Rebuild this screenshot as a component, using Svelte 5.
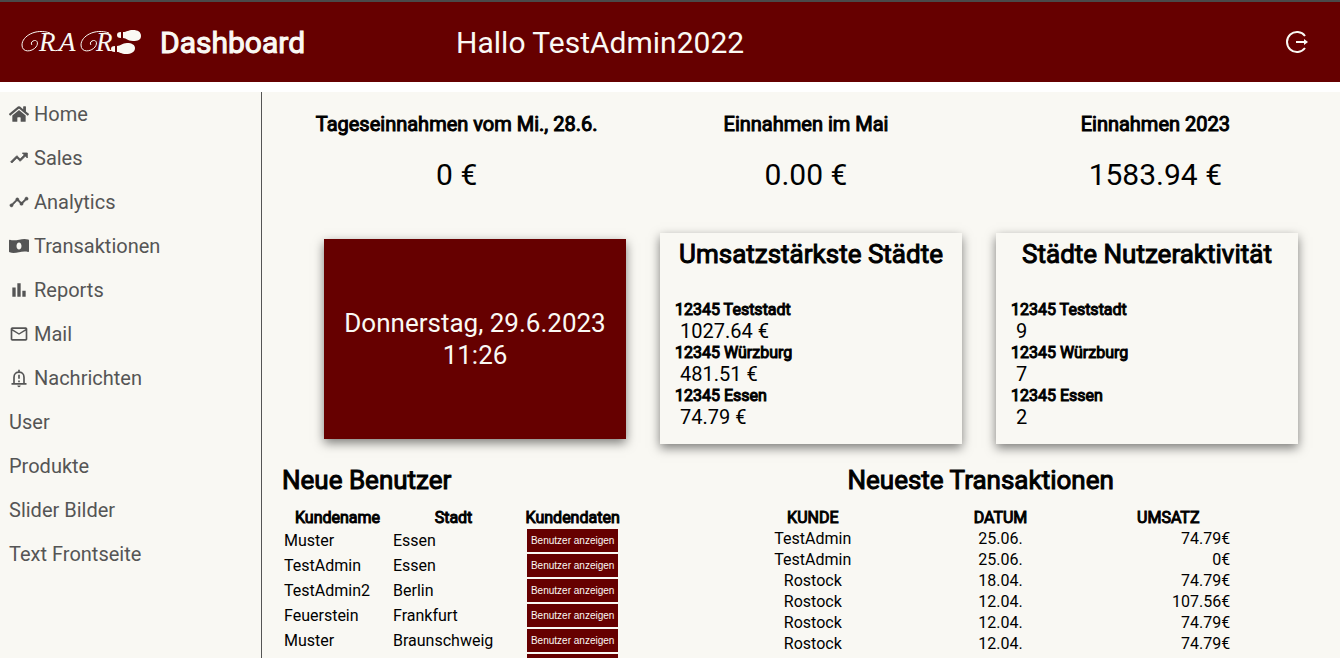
<script>
  const nav = [
    { label: 'Home', icon: 'home' },
    { label: 'Sales', icon: 'sales' },
    { label: 'Analytics', icon: 'analytics' },
    { label: 'Transaktionen', icon: 'money' },
    { label: 'Reports', icon: 'reports' },
    { label: 'Mail', icon: 'mail' },
    { label: 'Nachrichten', icon: 'bell' },
    { label: 'User' },
    { label: 'Produkte' },
    { label: 'Slider Bilder' },
    { label: 'Text Frontseite' },
  ];

  const stats = [
    { title: 'Tageseinnahmen vom Mi., 28.6.', value: '0 €' },
    { title: 'Einnahmen im Mai', value: '0.00 €' },
    { title: 'Einnahmen 2023', value: '1583.94 €' },
  ];

  const cityCards = [
    {
      title: 'Umsatzstärkste Städte',
      rows: [
        ['12345 Teststadt', '1027.64 €'],
        ['12345 Würzburg', '481.51 €'],
        ['12345 Essen', '74.79 €'],
      ],
    },
    {
      title: 'Städte Nutzeraktivität',
      rows: [
        ['12345 Teststadt', '9'],
        ['12345 Würzburg', '7'],
        ['12345 Essen', '2'],
      ],
    },
  ];

  const users = [
    ['Muster', 'Essen'],
    ['TestAdmin', 'Essen'],
    ['TestAdmin2', 'Berlin'],
    ['Feuerstein', 'Frankfurt'],
    ['Muster', 'Braunschweig'],
    ['Muster', 'Essen'],
  ];

  const transactions = [
    ['TestAdmin', '25.06.', '74.79€'],
    ['TestAdmin', '25.06.', '0€'],
    ['Rostock', '18.04.', '74.79€'],
    ['Rostock', '12.04.', '107.56€'],
    ['Rostock', '12.04.', '74.79€'],
    ['Rostock', '12.04.', '74.79€'],
  ];
</script>

<div class="page">
  <header>
    <a class="logo" href="#home" aria-label="RAR">
      <svg viewBox="0 0 122 30" width="122" height="30">
        <g class="lettering">
          <text x="19" y="24">R</text>
          <text x="39" y="24">A</text>
          <text x="76" y="24">R</text>
        </g>
        <g class="swash">
          <path d="M30 6C16 1 2 9 2 18c0 8 10 7 14 2 3-4 1-8-3-6-2 1-2 3-1 4" />
          <path d="M33 23c4 2 7-1 10-4" />
          <path d="M89 6C75 1 61 9 61 18c0 8 10 7 14 2 3-4 1-8-3-6-2 1-2 3-1 4" />
        </g>
        <g class="feet">
          <path d="M101 5v6c-3 0-4-1-4-3s1-3 4-3zM103 5c4 0 5-2 10-2s8 2 8 6-3 5-8 5c-6 0-6-3-10-3z" />
          <path d="M95 19v6c-3 0-4-1-4-3s1-3 4-3zM97 19c4 0 5-3 10-3s8 2 8 5c0 4-4 6-9 6s-6-2-9-2z" />
        </g>
      </svg>
    </a>
    <h1>Dashboard</h1>
    <p class="greeting">Hallo TestAdmin2022</p>
    <button class="logout" aria-label="Abmelden">
      <svg viewBox="0 0 24 24" width="24" height="24">
        <path class="ring" d="M20 6A10 10 0 1 0 20 18" />
        <path class="ring" d="M11 12h9" />
        <path class="tip" d="M19 9l4 3-4 3z" />
      </svg>
    </button>
  </header>

  <div class="body">
    <nav>
      {#each nav as item}
        <a href="#{item.label}">
          {#if item.icon}
            <svg viewBox="0 0 24 24" width="20" height="20">
              {#if item.icon === 'home'}
                <g transform="scale(0.04167)">
                  <path d="M280.370 148.260L96 300.110V464a16 16 0 0 0 16 16l112.060-.290a16 16 0 0 0 15.920-16V368a16 16 0 0 1 16-16h64a16 16 0 0 1 16 16v95.640a16 16 0 0 0 16 16.050L464 480a16 16 0 0 0 16-16V300L295.670 148.260a12.190 12.190 0 0 0-15.300 0zM571.600 251.470L488 182.560V44.050a12 12 0 0 0-12-12h-56a12 12 0 0 0-12 12v72.610L318.470 43a48 48 0 0 0-61 0L4.340 251.470a12 12 0 0 0-1.600 16.900l25.500 31A12 12 0 0 0 45.150 301l235.220-193.740a12.190 12.190 0 0 1 15.300 0L530.900 301a12 12 0 0 0 16.900-1.600l25.500-31a12 12 0 0 0-1.700-16.930z" transform="translate(0 32)" />
                </g>
              {:else if item.icon === 'sales'}
                <path d="M16 6l2.290 2.290-4.880 4.880-4-4L2 16.590 3.410 18l6-6 4 4 6.300-6.290L22 12V6z" stroke="currentColor" />
              {:else if item.icon === 'analytics'}
                <path d="M23 8c0 1.100-.9 2-2 2-.18 0-.350-.020-.510-.070l-3.560 3.550c.050.160.070.340.070.520 0 1.100-.9 2-2 2s-2-.9-2-2c0-.180.020-.360.070-.520l-2.550-2.550c-.160.050-.340.070-.520.070s-.360-.020-.520-.070l-4.550 4.560c.050.160.070.330.070.510 0 1.100-.9 2-2 2s-2-.9-2-2 .9-2 2-2c.180 0 .350.020.510.070l4.560-4.550C8.020 9.360 8 9.180 8 9c0-1.100.9-2 2-2s2 .9 2 2c0 .180-.020.360-.070.520l2.550 2.550c.160-.050.340-.070.520-.070s.360.020.520.070l3.550-3.560C19.020 8.350 19 8.180 19 8c0-1.100.9-2 2-2s2 .9 2 2z" stroke="currentColor" stroke-width="0.5" />
              {:else if item.icon === 'money'}
                <path fill-rule="evenodd" d="M23 4.300c-7-2.600-14 2.600-22 .3-.6-.1-1 .3-1 .9v13c0 .5.3.9.8 1.100 7.200 2.600 14.400-2.600 22.200-.3.600.1 1-.3 1-.9v-13c0-.5-.4-.9-1-1.100zM12 16.300c-1.700 0-3-1.900-3-4.300s1.300-4.300 3-4.300 3 1.900 3 4.300-1.300 4.300-3 4.300z" />
              {:else if item.icon === 'reports'}
                <path d="M4 9h4v11H4zM16 13h4v7h-4zM10 4h4v16h-4z" />
              {:else if item.icon === 'mail'}
                <path d="M22 6c0-1.100-.9-2-2-2H4c-1.100 0-2 .9-2 2v12c0 1.100.9 2 2 2h16c1.100 0 2-.9 2-2V6zm-2 0l-8 5-8-5h16zm0 12H4V8l8 5 8-5v10z" />
              {:else}
                <path fill="none" stroke="currentColor" stroke-width="2" d="M3 19h18M6 19v-8c0-4 3-6 6-6s6 2 6 6v8M12 5V2" />
                <path d="M11 8h2v5h-2zM11 15h2v2h-2zM10 21h4c0 1-1 2-2 2s-2-1-2-2z" />
              {/if}
            </svg>
          {/if}
          <span>{item.label}</span>
        </a>
      {/each}
    </nav>

    <main>
      <section class="stats">
        {#each stats as stat}
          <div>
            <h3>{stat.title}</h3>
            <p>{stat.value}</p>
          </div>
        {/each}
      </section>

      <section class="cards">
        <div class="card clock">
          <span>Donnerstag, 29.6.2023</span>
          <span>11:26</span>
        </div>
        {#each cityCards as card}
          <div class="card cities">
            <h2>{card.title}</h2>
            <dl>
              {#each card.rows as [city, value]}
                <dt>{city}</dt>
                <dd>{value}</dd>
              {/each}
            </dl>
          </div>
        {/each}
      </section>

      <section class="lists">
        <div class="users">
          <h2>Neue Benutzer</h2>
          <table>
            <thead>
              <tr><th>Kundename</th><th>Stadt</th><th>Kundendaten</th></tr>
            </thead>
            <tbody>
              {#each users as [name, city]}
                <tr>
                  <td>{name}</td>
                  <td>{city}</td>
                  <td><button>Benutzer anzeigen</button></td>
                </tr>
              {/each}
            </tbody>
          </table>
        </div>

        <div class="transactions">
          <h2>Neueste Transaktionen</h2>
          <table>
            <thead>
              <tr><th>KUNDE</th><th>DATUM</th><th>UMSATZ</th></tr>
            </thead>
            <tbody>
              {#each transactions as [customer, date, amount]}
                <tr><td>{customer}</td><td>{date}</td><td>{amount}</td></tr>
              {/each}
            </tbody>
          </table>
        </div>
      </section>
    </main>
  </div>
</div>

<style>
  :global(body) {
    margin: 0;
    background: #fff;
  }

  .page {
    display: flex;
    flex-direction: column;
    height: 100vh;
    overflow: hidden;
    font-family: Roboto, sans-serif;
    font-size: 16px;
    color: #000;
  }

  h1, h2, h3, p, dl, dd {
    margin: 0;
  }

  h1, h2, h3, th, dt {
    font-weight: 400;
    -webkit-text-stroke: 1px currentColor;
  }

  h2 {
    font-size: 26px;
    line-height: 30px;
  }

  header {
    display: flex;
    align-items: center;
    flex: none;
    height: 80px;
    padding: 0 31px 0 20px;
    border-top: 2px solid #4a4a4a;
    margin-bottom: 10px;
    background: #660000;
    color: #faf9f4;
    font-size: 30px;
  }

  h1 {
    margin-left: 18px;
    font-size: 30px;
  }

  .greeting {
    margin-left: 151px;
  }

  .logo, .logo svg, .logout svg {
    display: block;
  }

  .lettering {
    font: italic 27px "Liberation Serif", serif;
    fill: #faf9f4;
  }

  .swash {
    fill: none;
    stroke: #faf9f4;
  }

  .feet, .tip {
    fill: #faf9f4;
  }

  .logout {
    margin-left: auto;
    padding: 0;
    border: 0;
    background: none;
    cursor: pointer;
  }

  .ring {
    fill: none;
    stroke: #faf9f4;
    stroke-width: 2;
  }

  .body {
    display: flex;
    flex: 1;
    min-height: 0;
    background: #f9f8f3;
  }

  nav {
    flex: none;
    width: 252px;
    padding-left: 9px;
    border-right: 1px solid #555;
  }

  nav a {
    display: flex;
    align-items: center;
    gap: 5px;
    height: 44px;
    color: #555;
    font-size: 20px;
    text-decoration: none;
  }

  nav svg {
    fill: currentColor;
  }

  main {
    flex: 1;
    min-width: 0;
    padding: 20px 10px 0 20px;
  }

  .stats {
    display: grid;
    grid-template-columns: repeat(3, 1fr);
    text-align: center;
  }

  .stats h3 {
    margin-bottom: 21px;
    font-size: 20px;
    line-height: 24px;
  }

  .stats p {
    font-size: 30px;
    line-height: 35px;
  }

  .cards {
    display: grid;
    grid-template-columns: repeat(3, 1fr);
    align-items: center;
    gap: 34px;
    margin: 41px 32px 21px 42px;
  }

  .card {
    box-sizing: border-box;
    box-shadow: 0 4px 10px rgba(0, 0, 0, 0.5);
  }

  .clock {
    display: flex;
    flex-direction: column;
    align-items: center;
    justify-content: center;
    height: 200px;
    background: #660000;
    color: #faf9f4;
    font-size: 26px;
    line-height: 32px;
  }

  .cities {
    padding: 6px 15px 15px;
    background: #f9f8f3;
  }

  .cities h2 {
    margin-bottom: 31px;
    text-align: center;
    white-space: nowrap;
  }

  dt {
    line-height: 19px;
  }

  dd {
    padding-left: 5px;
    font-size: 20px;
    line-height: 24px;
  }

  .lists {
    display: grid;
    grid-template-columns: 1fr 2fr;
  }

  .lists h2 {
    margin-bottom: 11px;
  }

  table {
    table-layout: fixed;
    border-spacing: 2px;
    line-height: 19px;
  }

  th, td {
    padding: 0;
  }

  .users table {
    width: 100%;
  }

  .users th:nth-child(1) {
    width: 107px;
  }

  .users th:nth-child(2) {
    width: 121px;
  }

  .users td:last-child {
    text-align: center;
  }

  .users button {
    display: block;
    height: 23px;
    margin: 0 auto;
    padding: 0 4px;
    border: 0;
    background: #660000;
    color: #faf9f4;
    font: 10px "Liberation Sans", Arial, sans-serif;
    white-space: nowrap;
    cursor: pointer;
  }

  .transactions {
    text-align: center;
  }

  .transactions table {
    width: 72%;
    margin: 0 auto;
  }

  .transactions th:nth-child(1) {
    width: 33%;
  }

  .transactions th:nth-child(2) {
    width: 42%;
  }

  .transactions td:last-child {
    text-align: right;
  }
</style>
